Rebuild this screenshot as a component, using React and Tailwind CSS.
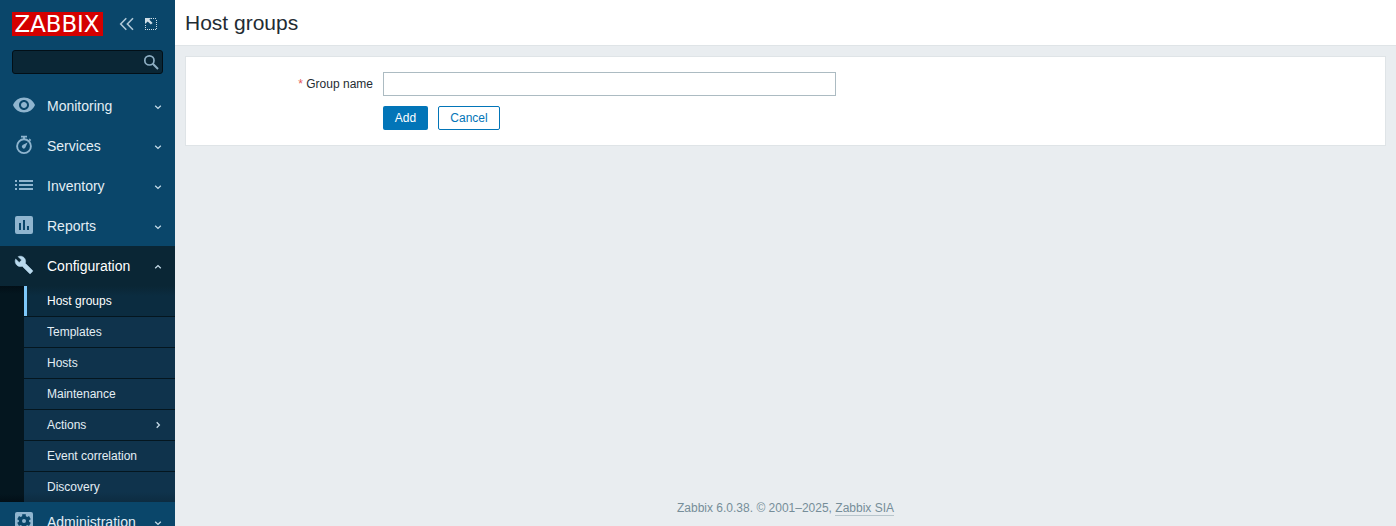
import React from "react";

const EyeIcon = () => (
  <svg width="24" height="24" viewBox="0 0 24 24" fill="currentColor">
    <path d="M12 4.5C7 4.5 2.73 7.61 1 12c1.73 4.39 6 7.5 11 7.5s9.27-3.11 11-7.5c-1.73-4.39-6-7.5-11-7.5zM12 17c-2.76 0-5-2.24-5-5s2.24-5 5-5 5 2.24 5 5-2.24 5-5 5zm0-8c-1.66 0-3 1.34-3 3s1.34 3 3 3 3-1.34 3-3-1.34-3-3-3z" />
  </svg>
);

const StopwatchIcon = () => (
  <svg width="24" height="24" viewBox="0 0 24 24" fill="none" stroke="currentColor">
    <circle cx="12" cy="13.200" r="6.900" strokeWidth="1.900" />
    <path d="M9 3.700h6M12 4v3" strokeWidth="1.800" />
    <path d="M16.600 7.200l1.500 1.500M17.200 5.800l1.700 1.700" strokeWidth="1.100" />
    <path d="M15.600 9.600l-2.200 5a1.900 1.900 0 1 1-2.800-2.500z" fill="currentColor" stroke="none" />
  </svg>
);

const ListIcon = () => (
  <svg width="24" height="24" viewBox="0 0 24 24" fill="currentColor">
    <path d="M3 7h2v2H3zM3 11h2v2H3zM3 15h2v2H3zM7 7h14v2H7zM7 11h14v2H7zM7 15h14v2H7z" />
  </svg>
);

const ReportsIcon = () => (
  <svg width="24" height="24" viewBox="0 0 24 24" fill="currentColor">
    <path d="M19 3H5a2 2 0 0 0-2 2v14a2 2 0 0 0 2 2h14a2 2 0 0 0 2-2V5a2 2 0 0 0-2-2zM9 17H7v-7h2zm4 0h-2V7h2zm4 0h-2v-4h2z" />
  </svg>
);

const WrenchIcon = () => (
  <svg width="24" height="24" viewBox="0 0 24 24" fill="currentColor">
    <path transform="translate(2.4 2.3) scale(.8)" stroke="currentColor" strokeWidth=".7" d="M22.7 19l-9.1-9.1c.9-2.3.4-5-1.500-6.900-2-2-5-2.400-7.400-1.300L9 6 6 9 1.600 4.700C.4 7.100.9 10.100 2.900 12.100c1.900 1.900 4.600 2.400 6.900 1.500l9.100 9.100c.4.4 1 .4 1.400 0l2.300-2.300c.5-.4.5-1.100.1-1.400z" />
  </svg>
);

const GearIcon = () => (
  <svg width="24" height="24" viewBox="0 0 24 24">
    <rect x="3" y="3" width="18" height="18" rx="2" fill="currentColor" />
    <g fill="#0a466a">
      <circle cx="12" cy="12" r="5.200" />
      <rect x="10.200" y="5.200" width="3.600" height="13.600" />
      <rect x="10.200" y="5.200" width="3.600" height="13.600" transform="rotate(60 12 12)" />
      <rect x="10.200" y="5.200" width="3.600" height="13.600" transform="rotate(120 12 12)" />
    </g>
    <circle cx="12" cy="12" r="2" fill="currentColor" />
  </svg>
);

const Chevron = ({ turn }) => (
  <svg width="8" height="8" viewBox="0 0 8 8" className={turn} fill="none" stroke="currentColor" strokeWidth="1.300">
    <path d="M1.200 2.700L4 5.400l2.800-2.700" />
  </svg>
);

const MenuItem = ({ icon, label, active }) => (
  <a
    className={
      "flex h-10 shrink-0 items-center pl-3 pr-[13px] text-sm " +
      (active ? "bg-[#0a2635] text-white" : "text-[#e3eef5]")
    }
  >
    <span className={"-mt-0.5 mr-[11px] " + (active ? "text-[#b9daee]" : "text-[#8fb5cf]")}>{icon}</span>
    <span className="flex-1">{label}</span>
    <span className="mt-px text-[#c5dbe8]">
      <Chevron turn={active ? "rotate-180" : ""} />
    </span>
  </a>
);

const subItems = ["Host groups", "Templates", "Hosts", "Maintenance", "Actions", "Event correlation", "Discovery"];

const SubMenu = () => (
  <div className="flex shrink-0 flex-col gap-px bg-[linear-gradient(to_bottom,#020f17,#04161f_8px,#04161f_208px,#020f17)] pl-6">
    {subItems.map((item, i) => (
      <a
        key={item}
        className={
          "flex h-[30px] items-center pr-[13px] text-xs " +
          (i === 0
            ? "border-l-3 border-l-[#7dc8fa] bg-[linear-gradient(to_bottom,#0a2635,#0b2c40_10px)] pl-5 text-white"
            : i === subItems.length - 1
              ? "bg-[linear-gradient(to_bottom,#0f334c_20px,#0d2c41)] pl-[23px] text-[#e3eef5]"
              : "bg-[#0f334c] pl-[23px] text-[#e3eef5]")
        }
      >
        <span className="flex-1">{item}</span>
        {item === "Actions" && (
          <span className="text-[#c5dbe8]">
            <Chevron turn="-rotate-90" />
          </span>
        )}
      </a>
    ))}
  </div>
);

const Sidebar = () => (
  <aside className="flex w-[175px] shrink-0 flex-col overflow-hidden bg-[#0a466a]">
    <div className="flex h-[50px] shrink-0 items-start pl-3 pt-3">
      <svg width="91" height="24" viewBox="0 0 91 24">
        <rect width="91" height="24" fill="#d40000" />
        <text x="2.500" y="20.200" textLength="85" lengthAdjust="spacingAndGlyphs" fill="#fff" fontFamily="DejaVu Sans, sans-serif" fontSize="23">
          ZABBIX
        </text>
      </svg>
      <svg className="ml-4 mt-1" width="16" height="16" viewBox="0 0 16 16" fill="none" stroke="#b0c8d7" strokeWidth="1.600">
        <path d="M7.300 2.300L1.700 8l5.600 5.700M14 2.300L8.400 8l5.600 5.700" />
      </svg>
      <svg className="ml-[9px] mt-1" width="14" height="16" viewBox="0 0 14 16" fill="none" stroke="#cfdee7">
        <path d="M7 2.500h6M12.500 4v10M1.500 9v5M1 13.500h12" strokeDasharray="1 1" />
        <path d="M1 2h6L5.400 3.700l3.200 3.200-1.700 1.700-3.200-3.200L1 8z" fill="#cfdee7" stroke="none" />
      </svg>
    </div>
    <div className="ml-3 flex h-6 w-[151px] shrink-0 items-center justify-end rounded-[3px] border border-[#020f17] bg-[#0a2635] pr-[3px]">
      <svg width="16" height="16" viewBox="0 0 16 16" fill="none" stroke="#8eafc4">
        <circle cx="6.400" cy="6.400" r="4.600" strokeWidth="1.700" />
        <path d="M9.800 9.800l5.200 5.200" strokeWidth="2" />
      </svg>
    </div>
    <nav className="flex flex-col pt-3">
      <MenuItem icon={<EyeIcon />} label="Monitoring" />
      <MenuItem icon={<StopwatchIcon />} label="Services" />
      <MenuItem icon={<ListIcon />} label="Inventory" />
      <MenuItem icon={<ReportsIcon />} label="Reports" />
      <MenuItem icon={<WrenchIcon />} label="Configuration" active />
      <SubMenu />
      <MenuItem icon={<GearIcon />} label="Administration" />
    </nav>
  </aside>
);

export default function App() {
  return (
    <div className="flex h-[526px] w-[1396px] overflow-hidden bg-[#e9edf0] font-['Liberation_Sans',Arial,sans-serif] text-xs text-[#1f2c33]">
      <Sidebar />
      <div className="flex flex-1 flex-col">
        <header className="flex h-[46px] items-center border-b border-[#dfe4e7] bg-white pl-2.5">
          <h1 className="text-[21px] leading-6">Host groups</h1>
        </header>
        <main className="flex-1 pl-2.5 pr-2.5 pt-2.5">
          <form className="h-[90px] border border-[#dfe4e7] bg-white pt-[15px]">
            <div className="flex h-6 items-center">
              <label className="w-[187px] text-right">
                <span className="text-[#e45959]">*</span> Group name
              </label>
              <input className="ml-2.5 h-6 w-[453px] border border-[#acbbc2] bg-white px-1 outline-none" type="text" />
            </div>
            <div className="mt-2.5 flex gap-2.5 pl-[197px]">
              <button type="button" className="h-6 w-[45px] rounded-[2px] bg-[#0275b8] text-white">
                Add
              </button>
              <button type="button" className="h-6 w-[62px] rounded-[2px] border border-[#0275b8] bg-white text-[#0275b8]">
                Cancel
              </button>
            </div>
          </form>
        </main>
        <footer className="flex h-[25px] items-start justify-center text-[#768d99]">
          <span className="whitespace-pre leading-[14px]">Zabbix 6.0.38. © 2001–2025, </span>
          <a className="border-b border-[#b8c5cc] leading-[14px]">Zabbix SIA</a>
        </footer>
      </div>
    </div>
  );
}
